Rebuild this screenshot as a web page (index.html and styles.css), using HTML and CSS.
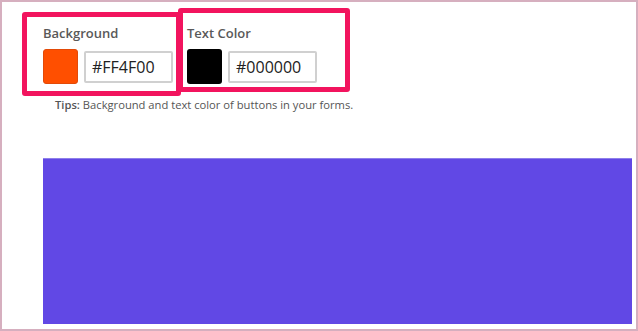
FILE: index.html
```html
<!DOCTYPE html>
<html>
<head>
<meta charset="utf-8">
<link rel="stylesheet" href="styles.css">
</head>
<body>
<div class="frame">
  <div class="fields">
    <div class="hl hl-bg">
      <div class="label">Background</div>
      <div class="row">
        <span class="swatch swatch-orange"></span>
        <span class="hex">#FF4F00</span>
      </div>
    </div>
    <div class="hl hl-text">
      <div class="label">Text Color</div>
      <div class="row">
        <span class="swatch swatch-black"></span>
        <span class="hex">#000000</span>
      </div>
    </div>
  </div>
  <div class="tips"><b>Tips:</b> Background and text color of buttons in your forms.</div>
  <div class="preview"></div>
</div>
</body>
</html>
```
FILE: styles.css
```css
html, body {
  margin: 0;
  padding: 0;
  background: #fff;
}
.frame {
  width: 638px;
  height: 331px;
  box-sizing: border-box;
  border: 2px solid #d6afbf;
  font-family: "Open Sans", "Liberation Sans", sans-serif;
  overflow: hidden;
}
.fields {
  display: flex;
  align-items: flex-start;
  margin: 10px 0 0 20px;
}
.hl {
  box-sizing: border-box;
  border: 5px solid #f2145e;
  border-radius: 3px;
  height: 84px;
}
.hl-bg {
  width: 159px;
  padding: 8px 0 0 16px;
}
.hl-text {
  width: 172px;
  margin-left: -3px;
  margin-top: -4px;
  padding: 12px 0 0 4px;
}
.label {
  font-size: 13px;
  font-weight: 600;
  color: #595959;
  line-height: 16px;
  height: 16px;
}
.row {
  display: flex;
  align-items: center;
  gap: 6px;
  margin-top: 8px;
}
.swatch {
  width: 35px;
  height: 35px;
  box-sizing: border-box;
  border-radius: 3px;
}
.swatch-orange {
  background: #ff4f00;
  border: 1px solid #e24a08;
}
.swatch-black {
  background: #000;
}
.hex {
  box-sizing: border-box;
  width: 89px;
  height: 32px;
  border: 2px solid #d0d0d0;
  border-radius: 2px;
  padding-left: 6px;
  font-size: 16px;
  line-height: 28px;
  color: #222;
}
.tips {
  margin: 2px 0 0 53px;
  font-size: 11.2px;
  line-height: 14px;
  color: #555;
}
.tips b {
  font-weight: 600;
}
.preview {
  margin: 46px 0 0 41px;
  width: 589px;
  height: 166px;
  background: #6148e5;
  border-top: 1px solid #8e7fea;
  box-sizing: border-box;
}
```
